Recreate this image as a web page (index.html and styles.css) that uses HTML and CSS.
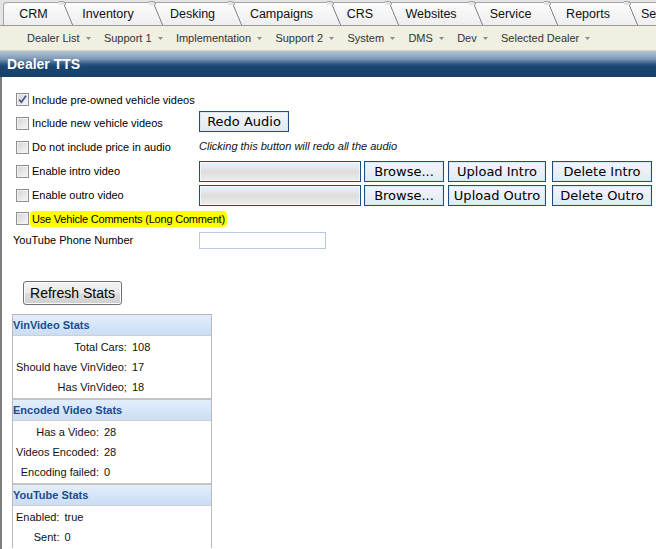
FILE: index.html
```html
<!DOCTYPE html>
<html>
<head>
<meta charset="utf-8">
<title>Dealer TTS</title>
<link rel="stylesheet" href="styles.css">
</head>
<body>
<div class="tabbar">
  <div class="tab first">CRM</div>
  <div class="tab">Inventory</div>
  <div class="tab">Desking</div>
  <div class="tab">Campaigns</div>
  <div class="tab">CRS</div>
  <div class="tab">Websites</div>
  <div class="tab">Service</div>
  <div class="tab">Reports</div>
  <div class="tab last">Se</div>
</div>
<div class="submenu">
  <span class="mi">Dealer List<svg class="arr" width="5" height="3" viewBox="0 0 5 3"><polygon points="0,0 5,0 2.5,3" fill="#8a8a8a"/></svg></span>
  <span class="mi">Support 1<svg class="arr" width="5" height="3" viewBox="0 0 5 3"><polygon points="0,0 5,0 2.5,3" fill="#8a8a8a"/></svg></span>
  <span class="mi">Implementation<svg class="arr" width="5" height="3" viewBox="0 0 5 3"><polygon points="0,0 5,0 2.5,3" fill="#8a8a8a"/></svg></span>
  <span class="mi">Support 2<svg class="arr" width="5" height="3" viewBox="0 0 5 3"><polygon points="0,0 5,0 2.5,3" fill="#8a8a8a"/></svg></span>
  <span class="mi">System<svg class="arr" width="5" height="3" viewBox="0 0 5 3"><polygon points="0,0 5,0 2.5,3" fill="#8a8a8a"/></svg></span>
  <span class="mi">DMS<svg class="arr" width="5" height="3" viewBox="0 0 5 3"><polygon points="0,0 5,0 2.5,3" fill="#8a8a8a"/></svg></span>
  <span class="mi">Dev<svg class="arr" width="5" height="3" viewBox="0 0 5 3"><polygon points="0,0 5,0 2.5,3" fill="#8a8a8a"/></svg></span>
  <span class="mi">Selected Dealer<svg class="arr" width="5" height="3" viewBox="0 0 5 3"><polygon points="0,0 5,0 2.5,3" fill="#8a8a8a"/></svg></span>
</div>
<div class="titlebar">Dealer TTS</div>
<div class="content">
  <div class="form">
    <label class="chk"><span class="cb checked"><svg width="11" height="11" viewBox="0 0 11 11"><path d="M2.2 5.6 L4.4 8.2 L9 1.8" fill="none" stroke="#3f5386" stroke-width="1.7"/></svg></span>Include pre-owned vehicle videos</label>
    <div class="cell"></div>

    <label class="chk"><span class="cb"></span>Include new vehicle videos</label>
    <div class="cell"><button class="btn redo">Redo Audio</button></div>

    <label class="chk"><span class="cb"></span>Do not include price in audio</label>
    <div class="cell"><span class="note">Clicking this button will redo all the audio</span></div>

    <label class="chk"><span class="cb"></span>Enable intro video</label>
    <div class="cell files"><span class="filebox"></span><button class="btn browse">Browse...</button><button class="btn upload">Upload Intro</button><button class="btn delete">Delete Intro</button></div>

    <label class="chk"><span class="cb"></span>Enable outro video</label>
    <div class="cell files"><span class="filebox"></span><button class="btn browse">Browse...</button><button class="btn upload">Upload Outro</button><button class="btn delete">Delete Outro</button></div>

    <label class="chk"><span class="cb"></span><span class="hl">Use Vehicle Comments (Long Comment)</span></label>
    <div class="cell"></div>

    <label class="plain">YouTube Phone Number</label>
    <div class="cell"><input class="phone" type="text"></div>
  </div>

  <div class="refresh"><button class="rbtn">Refresh Stats</button></div>

  <div class="stats">
    <div class="sh">VinVideo Stats</div>
    <div class="sb">
      <table>
        <tr><td class="k">Total Cars:</td><td>108</td></tr>
        <tr><td class="k">Should have VinVideo:</td><td>17</td></tr>
        <tr><td class="k">Has VinVideo;</td><td>18</td></tr>
      </table>
    </div>
    <div class="sh sep">Encoded Video Stats</div>
    <div class="sb">
      <table>
        <tr><td class="k">Has a Video:</td><td>28</td></tr>
        <tr><td class="k">Videos Encoded:</td><td>28</td></tr>
        <tr><td class="k">Encoding failed:</td><td>0</td></tr>
      </table>
    </div>
    <div class="sh sep">YouTube Stats</div>
    <div class="sb">
      <table>
        <tr><td class="k">Enabled:</td><td>true</td></tr>
        <tr><td class="k">Sent:</td><td>0</td></tr>
      </table>
    </div>
  </div>
</div>
</body>
</html>
```

FILE: styles.css
```css
* { box-sizing: border-box; }
html, body { margin: 0; padding: 0; }
body {
  width: 656px;
  height: 549px;
  overflow: hidden;
  font-family: "Liberation Sans", Arial, sans-serif;
  font-size: 11px;
  color: #000;
  background: #fff;
}

/* tabs */
.tabbar {
  display: grid;
  grid-template-columns: 60px 90px 79px 99px 58px 84px 75px 80px 1fr;
  height: 26px;
  padding: 2px 0 0 3px;
  background: #e4e4e4;
  border-bottom: 1px solid #9a9a9a;
  overflow: hidden;
}
.tab {
  position: relative;
  font-size: 12.5px;
  color: #111;
  text-align: center;
  line-height: 22px;
  border-top: 1px solid #a4a4a4;
  background: linear-gradient(#fcfcfc, #eeeeee);
  white-space: nowrap;
}
.tab::after {
  content: "";
  position: absolute;
  z-index: 1;
  top: -1px;
  right: -10px;
  width: 10px;
  height: 24px;
  background: linear-gradient(to top right, transparent calc(50% - 0.8px), #8a8a8a calc(50% - 0.2px), #8a8a8a calc(50% + 0.2px), transparent calc(50% + 0.8px));
}
.tab::before {
  content: "";
  position: absolute;
  z-index: 2;
  top: -2px;
  right: -3px;
  width: 6px;
  height: 3px;
  border-top: 1px solid #a4a4a4;
  border-right: 1px solid #a4a4a4;
  border-top-right-radius: 5px;
  background: #e4e4e4;
}
.tab.first {
  border-left: 1px solid #a4a4a4;
  border-top-left-radius: 4px;
}
.tab.last { text-align: left; padding-left: 13px; }
.tab.last::after, .tab.last::before { display: none; }

/* submenu */
.submenu {
  display: flex;
  align-items: center;
  height: 25px;
  padding-left: 27px;
  background: #efefe2;
  border-bottom: 1px solid #d4d4c6;
}
.mi {
  display: flex;
  align-items: center;
  color: #333;
  margin-right: 13.3px;
  white-space: nowrap;
}
.arr { margin-left: 6px; margin-top: 1px; }

/* title */
.titlebar {
  height: 26px;
  line-height: 26px;
  padding-left: 7px;
  color: #fff;
  font-weight: bold;
  font-size: 14px;
  background: linear-gradient(#b3c4d6 0%, #7f9ab6 30%, #2d5882 50%, #1a4672 60%, #163f69 100%);
}

/* content */
.content {
  border-left: 2px solid #7e7e7e;
  padding: 11px 0 0 10px;
  height: 472px;
}
.form {
  display: grid;
  grid-template-columns: 183px auto;
  grid-template-rows: 23px 24px 24px 24px 24px 23px 20px;
  margin-left: 4px;
}
.chk, .plain {
  display: flex;
  align-items: center;
  white-space: nowrap;
  min-width: 0;
}
.plain { margin-left: -3px; }
.cell { display: flex; align-items: center; }
.cb {
  flex: none;
  display: inline-flex;
  align-items: center;
  justify-content: center;
  width: 13px;
  height: 13px;
  margin-right: 3px;
  border: 1px solid #8f8f8f;
  background: linear-gradient(135deg, #d3d3d3, #f7f7f7);
  box-shadow: inset 0 0 0 1px #f2f2f2;
}
.hl {
  flex: none;
  background: #ffff00;
  border-radius: 4px;
  padding: 2px 2px 2px 2px;
  margin-left: -2px;
  letter-spacing: -0.2px;
}

.btn {
  font-family: "DejaVu Sans", Verdana, sans-serif;
  font-size: 13px;
  color: #000;
  height: 21px;
  padding: 0;
  border: 1px solid #1f4f80;
  background: linear-gradient(#f3f6f9, #e2e9f0);
  box-shadow: inset 0 0 0 1px #dbe6f1;
}
.redo { width: 90px; margin-top: -3px; }
.note { font-style: italic; color: #111; margin-top: -2px; }
.filebox {
  width: 162px;
  height: 21px;
  border: 1px solid #1f4f80;
  background: linear-gradient(#f3f3f3, #dedede 50%, #ececec);
  box-shadow: inset 0 0 0 1px #f6f6f6;
}
.browse { width: 80px; margin-left: 3px; }
.upload { width: 98px; margin-left: 4px; }
.delete { width: 100px; margin-left: 6px; }
.phone {
  width: 127px;
  height: 17px;
  border: 1px solid #b7cadd;
  background: #fff;
  padding: 0;
}

.refresh { margin: 31px 0 0 11px; }
.rbtn {
  font-family: "Liberation Sans", Arial, sans-serif;
  font-size: 14px;
  width: 99px;
  height: 24px;
  padding: 0;
  color: #000;
  border: 1px solid #707070;
  border-radius: 3px;
  background: linear-gradient(#f2f2f2 0%, #ebebeb 50%, #dddddd 51%, #cfcfcf 100%);
  box-shadow: inset 0 0 0 1px #fbfbfb;
}

.stats {
  margin-top: 9px;
  width: 200px;
  border: 1px solid #b9b9b9;
  border-bottom: none;
}
.sh {
  height: 21px;
  line-height: 20px;
  padding-left: 0;
  font-weight: bold;
  color: #1b4c8e;
  background: linear-gradient(#e3eefb, #c9ddf5);
  border-bottom: 1px solid #cfcfcf;
}
.sh.sep { border-top: 2px solid #c3c3c3; height: 23px; }
.sb { padding: 1px 0; }
.sb table { border-collapse: collapse; }
.sb td { height: 20px; padding: 0 3px; color: #111; white-space: nowrap; }
.sb td.k { text-align: right; padding-left: 3px; padding-right: 2px; }
```
